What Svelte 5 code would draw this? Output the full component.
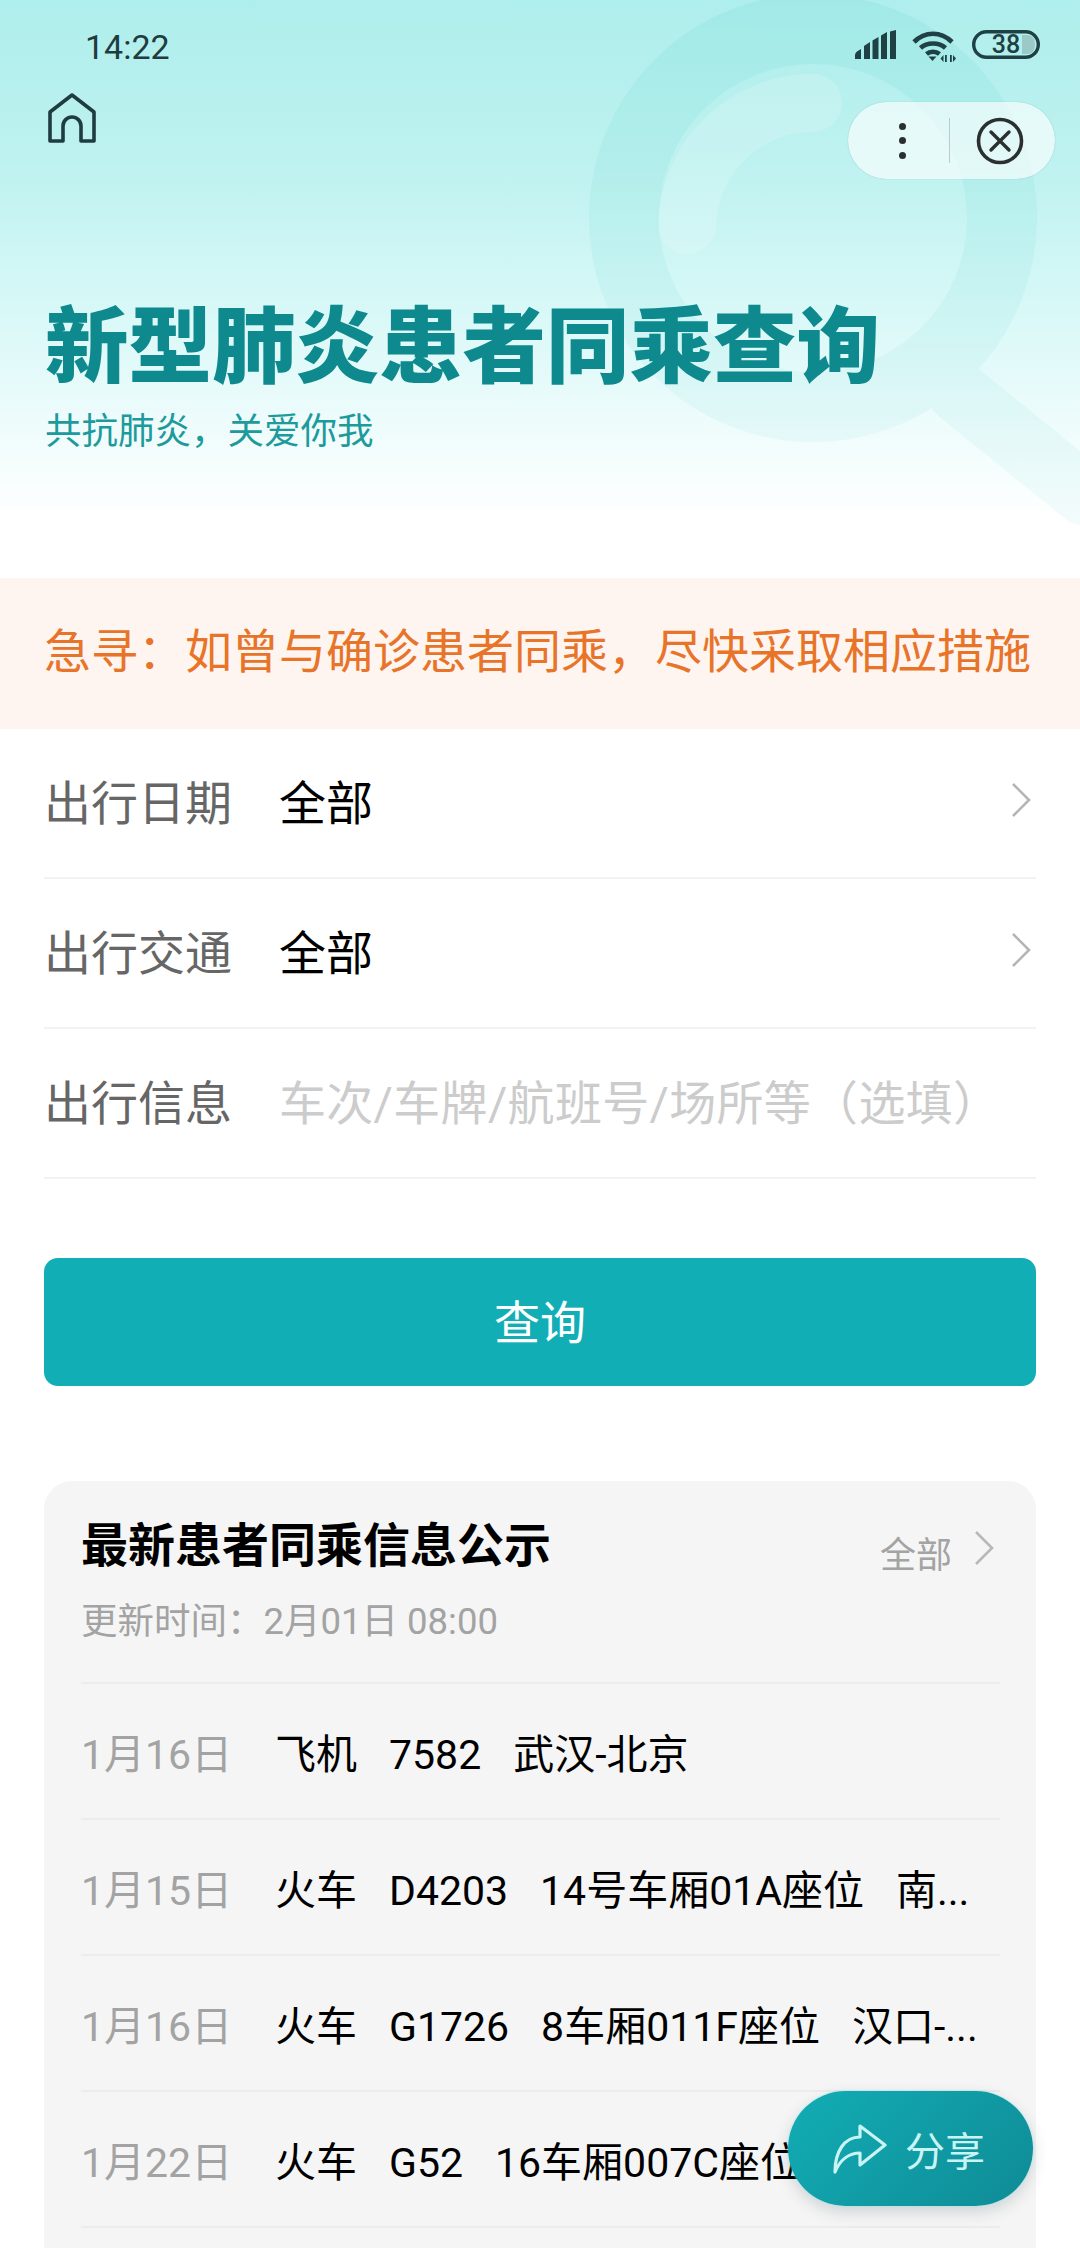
<script lang="ts">
    const filters = [
        { label: '出行日期', value: '全部', arrow: true },
        { label: '出行交通', value: '全部', arrow: true },
        { label: '出行信息', hint: '车次/车牌/航班号/场所等（选填）', arrow: false }
    ]

    const notices = [
        { date: '1月16日', parts: ['飞机', '7582', '武汉-北京'] },
        { date: '1月15日', parts: ['火车', 'D4203', '14号车厢01A座位', '南...'] },
        { date: '1月16日', parts: ['火车', 'G1726', '8车厢011F座位', '汉口-...'] },
        { date: '1月22日', parts: ['火车', 'G52', '16车厢007C座位'] }
    ]
</script>

<div class="page">
    <header class="hero">
        <svg class="watermark" width="1080" height="578" viewBox="0 0 1080 578" aria-hidden="true">
            <defs>
                <linearGradient id="markFade" x1="0" y1="0" x2="0" y2="1">
                    <stop offset="0" stop-color="#62d6d0" stop-opacity="0.16" />
                    <stop offset="0.55" stop-color="#62d6d0" stop-opacity="0.1" />
                    <stop offset="1" stop-color="#62d6d0" stop-opacity="0.07" />
                </linearGradient>
                <mask id="markShape" maskUnits="userSpaceOnUse" x="0" y="0" width="1080" height="578">
                    <circle cx="813" cy="218" r="189" fill="none" stroke="#fff" stroke-width="70" />
                    <path d="M958 392 L1085 495" fill="none" stroke="#fff" stroke-width="62" stroke-linecap="round" />
                </mask>
            </defs>
            <rect width="1080" height="578" fill="url(#markFade)" mask="url(#markShape)" />
            <path d="M687 225 A126 126 0 0 1 813 103" fill="none" stroke="#ffffff" stroke-opacity="0.16" stroke-width="58" stroke-linecap="round" />
        </svg>

        <div class="status">
            <span class="time">14:22</span>
            <div class="statusIcons">
                <svg width="41" height="29" viewBox="0 0 41 29" aria-hidden="true">
                    <path fill="#1f4145" d="M0 29v-4q0-2 2-3.500l4-2.500v10zM9 29V16l6-4v17zM17.500 29V10.500l6-3.500v22zM26 29V5.500l6-3.500v27zM35 29V1.500l6-1.500v29z" />
                </svg>
                <svg class="wifi" width="44" height="32" viewBox="0 0 44 32" aria-hidden="true">
                    <g fill="none" stroke="#1f4145" stroke-width="4.600">
                        <path d="M2 11 C13 0 29 0 40 11" />
                        <path d="M8.500 17 C15 11 27 11 33.500 17" />
                        <path d="M14.500 23 C18 20 24 20 27.500 23" />
                    </g>
                    <path fill="#1f4145" d="M16.500 25.500 h8 l-4 4.500z" />
                    <path fill="#1f4145" d="M33 24h1.800v7h-1.800zM28.500 27.500l3-3.500v7zM38 24h1.800v7H38zM44 27.500l-3-3.500v7z" />
                </svg>
                <svg width="68" height="29" viewBox="0 0 68 29">
                    <rect x="1.700" y="1.700" width="64.600" height="25.600" rx="12.800" fill="none" stroke="#1f4145" stroke-width="3.400" />
                    <path d="M50 5h5q8 0 8 9.500t-8 9.500h-5z" fill="#9bc9c8" />
                    <text x="34" y="23" text-anchor="middle" class="batteryText">38</text>
                </svg>
            </div>
        </div>

        <nav class="nav">
            <svg width="48" height="50" viewBox="0 0 48 50" aria-hidden="true">
                <path d="M2 48 V19 L24 2 L46 19 V48 H33 V33 A9 9 0 0 0 15 33 V48 Z" fill="none" stroke="#1f3c40" stroke-width="3.600" stroke-linejoin="round" />
            </svg>
            <div class="capsule">
                <div class="dots"><i></i><i></i><i></i></div>
                <span class="capsuleLine"></span>
                <svg width="50" height="50" viewBox="0 0 50 50" aria-hidden="true">
                    <circle cx="25" cy="25" r="21.500" fill="none" stroke="#2b2f30" stroke-width="3.600" />
                    <path d="M16 16 L34 34 M34 16 L16 34" stroke="#2b2f30" stroke-width="3.400" stroke-linecap="round" />
                </svg>
            </div>
        </nav>

        <h1>新型肺炎患者同乘查询</h1>
        <p class="slogan">共抗肺炎，关爱你我</p>
    </header>

    <div class="banner">急寻：如曾与确诊患者同乘，尽快采取相应措施</div>

    <section class="form">
        {#each filters as item}
            <div class="field">
                <span class="fieldLabel">{item.label}</span>
                {#if item.hint}
                    <span class="fieldHint">{item.hint}</span>
                {:else}
                    <span class="fieldValue">{item.value}</span>
                {/if}
                {#if item.arrow}
                    <svg class="arrow" width="22" height="36" viewBox="0 0 22 36" aria-hidden="true">
                        <path d="M3 2 L19 18 L3 34" fill="none" stroke="#b5b5b5" stroke-width="2.600" />
                    </svg>
                {/if}
            </div>
        {/each}
    </section>

    <button class="search">查询</button>

    <section class="card">
        <div class="cardHead">
            <div>
                <h2>最新患者同乘信息公示</h2>
                <p class="updated">更新时间：2月01日 08:00</p>
            </div>
            <div class="more">
                <span>全部</span>
                <svg width="20" height="36" viewBox="0 0 20 36" aria-hidden="true">
                    <path d="M2 2 L18 18 L2 34" fill="none" stroke="#b8b8b8" stroke-width="2.600" />
                </svg>
            </div>
        </div>
        {#each notices as row}
            <div class="notice">
                <span class="noticeDate">{row.date}</span>
                <div class="noticeParts">
                    {#each row.parts as part}
                        <span>{part}</span>
                    {/each}
                </div>
            </div>
        {/each}
    </section>

    <button class="share">
        <svg width="54" height="50" viewBox="0 0 54 50" aria-hidden="true">
            <path d="M27 2 L52 21 L27 41 V29 C16 29 7 36 2 48 C2 28 11 13 27 13 Z" fill="none" stroke="#c8f5f3" stroke-width="3.200" stroke-linejoin="round" />
        </svg>
        <span>分享</span>
    </button>
</div>

<style>
    :global(body) {
        margin: 0;
        background: #fff;
    }

    .page {
        position: relative;
        width: 1080px;
        height: 2248px;
        overflow: hidden;
        background: #fff;
        font-family: Roboto, "Noto Sans CJK SC", sans-serif;
    }

    .hero {
        position: relative;
        height: 578px;
        box-sizing: border-box;
        padding: 0 44px 0 45px;
        background: linear-gradient(180deg, #aeeeec 0%, #bff2f0 30%, #d6f8f7 52%, #f0fcfc 75%, #ffffff 90%);
    }

    .watermark {
        position: absolute;
        left: 0;
        top: 0;
    }

    .status {
        position: relative;
        display: flex;
        justify-content: space-between;
        align-items: center;
        height: 93px;
        padding: 0 0 0 40px;
        margin-right: -4px;
    }

    .time {
        font-size: 34px;
        color: #1f3c40;
    }

    .statusIcons {
        display: flex;
        align-items: flex-start;
        gap: 16px;
        margin-top: -1px;
    }

    .wifi {
        margin-top: 1px;
    }

    .batteryText {
        font-family: Roboto, sans-serif;
        font-size: 25px;
        font-weight: 500;
        fill: #1f4145;
    }

    .nav {
        position: relative;
        display: flex;
        justify-content: space-between;
        align-items: flex-start;
        margin-left: 3px;
        margin-right: -19px;
    }

    .capsule {
        display: flex;
        align-items: center;
        width: 207px;
        height: 77px;
        margin-top: 9px;
        box-sizing: border-box;
        padding-left: 51px;
        border-radius: 39px;
        background: rgba(255, 255, 255, 0.62);
        box-shadow: 0 0 1px rgba(60, 120, 120, 0.5);
    }

    .dots {
        display: flex;
        flex-direction: column;
        gap: 7.500px;
    }

    .dots i {
        display: block;
        width: 7px;
        height: 7px;
        border-radius: 50%;
        background: #2b2f30;
    }

    .capsuleLine {
        width: 1px;
        height: 45px;
        margin: 0 25px 0 43px;
        background: #b9cccc;
    }

    h1 {
        position: relative;
        margin: 119px 0 0;
        font-size: 83.500px;
        line-height: 100px;
        font-weight: 900;
        color: #0e8a8f;
        white-space: nowrap;
    }

    .slogan {
        position: relative;
        margin: 9px 0 0;
        font-size: 36.500px;
        line-height: 50px;
        color: #1c9a9c;
    }

    .banner {
        height: 151px;
        box-sizing: border-box;
        padding: 48px 0 0 44px;
        background: #fff5f0;
        color: #e8742a;
        font-size: 47px;
        line-height: 52px;
        white-space: nowrap;
    }

    .form {
        margin: 0 44px;
    }

    .field {
        display: flex;
        align-items: center;
        height: 150px;
        box-sizing: border-box;
        padding-bottom: 7px;
        border-bottom: 2px solid #f2f2f2;
    }

    .fieldLabel {
        width: 235px;
        font-size: 47px;
        color: #666;
    }

    .fieldValue {
        flex: 1;
        font-size: 47px;
        color: #000;
    }

    .fieldHint {
        font-size: 47px;
        letter-spacing: 0.3px;
        color: #ccc;
        white-space: nowrap;
    }

    .arrow {
        margin-right: 4px;
    }

    .search {
        display: block;
        width: 992px;
        height: 128px;
        margin: 79px 44px 0;
        padding: 0 0 7px;
        border: none;
        border-radius: 14px;
        background: #12aeb5;
        color: #fff;
        font: inherit;
        font-size: 46px;
    }

    .card {
        height: 770px;
        margin: 95px 44px 0;
        padding: 0 36px 0 37px;
        border-radius: 28px 28px 0 0;
        background: #f5f5f5;
    }

    .cardHead {
        display: flex;
        justify-content: space-between;
        height: 203px;
        box-sizing: border-box;
        padding-top: 37px;
        border-bottom: 2px solid #ececec;
    }

    h2 {
        margin: 0;
        font-size: 47px;
        line-height: 56px;
        font-weight: 700;
        color: #000;
        white-space: nowrap;
    }

    .updated {
        margin: 23px 0 0;
        font-size: 36.500px;
        line-height: 50px;
        color: #a3a3a3;
    }

    .more {
        display: flex;
        align-items: center;
        gap: 22px;
        height: 44px;
        margin-top: 8px;
        padding-right: 6px;
        font-size: 36px;
        color: #a3a3a3;
    }

    .more span {
        margin-top: 8px;
    }

    .notice {
        display: flex;
        align-items: center;
        height: 136px;
        box-sizing: border-box;
        border-bottom: 2px solid #ececec;
        font-size: 41px;
        white-space: nowrap;
    }

    .noticeDate {
        width: 194px;
        color: #a3a3a3;
    }

    .noticeParts {
        display: flex;
        align-items: baseline;
        gap: 32px;
        color: #000;
    }

    .share {
        position: absolute;
        left: 788px;
        top: 2091px;
        display: flex;
        align-items: center;
        gap: 18px;
        width: 245px;
        height: 115px;
        box-sizing: border-box;
        padding: 0 0 0 45px;
        border: none;
        border-radius: 58px;
        background: linear-gradient(135deg, #12adb5 0%, #0f8b96 100%);
        box-shadow: 0 0 2px #8fecec, 0 6px 16px rgba(0, 40, 50, 0.16);
        color: #c8f5f3;
        font: inherit;
        font-size: 40px;
    }
</style>
